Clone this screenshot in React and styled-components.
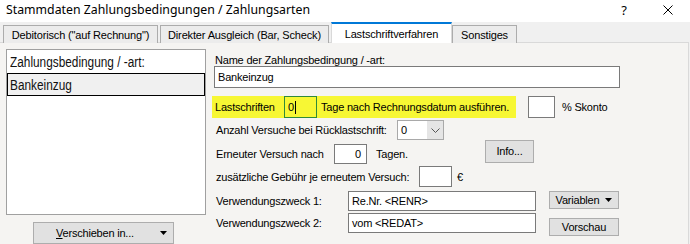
import styled, { createGlobalStyle } from 'styled-components';

const GlobalStyle = createGlobalStyle`
  html, body {
    margin: 0;
    padding: 0;
    background: #ffffff;
  }
  body {
    font-family: "Liberation Sans", Arial, sans-serif;
    font-size: 11px;
    color: #000;
  }
  * {
    box-sizing: border-box;
  }
`;

const Window = styled.div`
  width: 690px;
  height: 244px;
  overflow: hidden;
  display: flex;
  flex-direction: column;
  background: #f0f0f0;
`;

const TitleBar = styled.div`
  height: 22px;
  flex-shrink: 0;
  background: #ffffff;
  display: flex;
  align-items: center;
  padding: 0 0 3px 6px;
  font-family: "Noto Sans", "Open Sans", sans-serif;
  font-size: 12.3px;
`;

const TitleText = styled.div`
  flex: 1;
  white-space: nowrap;
`;

const TitleButton = styled.div`
  width: 44px;
  height: 20px;
  display: flex;
  align-items: center;
  justify-content: center;
  font-family: "Noto Sans", sans-serif;
  font-size: 13px;
`;

const TabStrip = styled.div`
  height: 21px;
  flex-shrink: 0;
  display: flex;
  align-items: flex-end;
  padding-left: 3px;
  letter-spacing: -0.15px;
`;

const Tab = styled.div`
  width: ${p => p.$w}px;
  height: ${p => (p.$active ? 21 : 18)}px;
  margin-right: ${p => p.$gap || 0}px;
  margin-left: ${p => p.$ml || 0}px;
  display: flex;
  align-items: center;
  justify-content: center;
  white-space: nowrap;
  background: ${p => (p.$active ? '#ffffff' : '#ececec')};
  border: 1px solid ${p => (p.$active ? '#d9d9d9' : '#acacac')};
  border-top: ${p => (p.$active ? '2px solid #0078d7' : '1px solid #acacac')};
  border-bottom: none;
  position: relative;
  z-index: ${p => (p.$active ? 2 : 1)};
  padding-top: ${p => (p.$active ? 0 : 1)}px;
`;

const Panel = styled.div`
  flex: 1;
  display: flex;
  background: #f5f4f2;
  border-top: 1px solid #d9d9d9;
  border-right: 1px solid #d9d9d9;
  margin-right: 1px;
  margin-top: -1px;
  padding: 6px 0 0 6px;
`;

const LeftColumn = styled.div`
  width: 200px;
  display: flex;
  flex-direction: column;
`;

const ListBox = styled.div`
  height: 166px;
  background: #ffffff;
  border: 1px solid #a0a0a0;
  font-size: 14px;
  color: #111;
`;

const ListHeader = styled.div`
  height: 23px;
  display: flex;
  align-items: center;
  padding-left: 3px;
  padding-top: 1px;
`;

const ListItem = styled.div`
  height: 23px;
  display: flex;
  align-items: center;
  padding-left: 2px;
  background: ${p => (p.$selected ? '#f0f0f0' : 'transparent')};
  border: 1px solid ${p => (p.$selected ? '#000' : 'transparent')};
`;

/* narrow face of the list font */
const NarrowText = styled.span`
  display: inline-block;
  white-space: nowrap;
  transform: scaleX(0.845);
  transform-origin: left center;
`;

const Button = styled.div`
  width: ${p => p.$w}px;
  height: ${p => p.$h || 22}px;
  background: #e1e1e1;
  border: 1px solid #adadad;
  display: flex;
  align-items: center;
  justify-content: center;
  gap: 6px;
  white-space: nowrap;
  letter-spacing: -0.2px;
  flex-shrink: 0;
`;

const MoveButton = styled(Button)`
  margin: 7px 0 0 27px;
  justify-content: flex-start;
  padding-left: 22px;
  padding-right: 6px;
  gap: 0;
`;

const MoveLabel = styled.span`
  flex: 1;
`;

const Caret = styled.svg`
  display: block;
  flex-shrink: 0;
`;

const RightColumn = styled.div`
  margin-left: 8px;
  padding-top: 5px;
  display: flex;
  flex-direction: column;
  letter-spacing: -0.2px;
`;

const FieldLabel = styled.div`
  height: 12px;
  line-height: 12px;
  padding-left: 1px;
  white-space: nowrap;
`;

const TextBox = styled.div`
  width: ${p => p.$w}px;
  height: ${p => p.$h || 20}px;
  background: ${p => p.$bg || '#ffffff'};
  border: 1px solid ${p => p.$border || '#7a7a7a'};
  display: flex;
  align-items: center;
  justify-content: ${p => (p.$right ? 'flex-end' : 'flex-start')};
  padding: 0 ${p => (p.$right ? 5 : 3)}px 0 3px;
  white-space: nowrap;
  flex-shrink: 0;
`;

const Row = styled.div`
  display: flex;
  align-items: center;
  height: ${p => p.$h}px;
  margin-top: ${p => p.$mt || 0}px;
  white-space: nowrap;
`;

const Highlight = styled.div`
  display: flex;
  align-items: center;
  height: 22px;
  width: 304px;
  margin-left: -2px;
  padding-left: 3px;
  background: #f7f734;
`;

const Text = styled.span`
  margin-left: ${p => p.$ml || 0}px;
  width: ${p => (p.$w ? `${p.$w}px` : 'auto')};
  flex-shrink: 0;
`;

const TextCursor = styled.span`
  display: inline-block;
  width: 1px;
  height: 13px;
  background: #000;
  margin-left: 1px;
`;

const Combo = styled.div`
  width: 47px;
  height: 20px;
  display: flex;
  border: 1px solid #a9a9a9;
  background: #ffffff;
`;

const ComboValue = styled.div`
  flex: 1;
  display: flex;
  align-items: center;
  padding-left: 3px;
`;

const ComboArrow = styled.div`
  width: 16px;
  display: flex;
  align-items: center;
  justify-content: center;
  background: #e5e5e5;
`;

const Slot = styled.div`
  margin-left: ${p => p.$ml || 0}px;
  align-self: ${p => p.$align || 'center'};
  margin-top: ${p => p.$mt || 0}px;
`;

const DownTriangle = () => (
  <Caret width="7" height="4" viewBox="0 0 7 4">
    <path d="M0 0 H7 L3.5 4 Z" fill="#000" />
  </Caret>
);

const App = () => {
  return (
    <>
      <GlobalStyle />
      <Window>
        <TitleBar>
          <TitleText>Stammdaten Zahlungsbedingungen / Zahlungsarten</TitleText>
          <TitleButton>?</TitleButton>
          <TitleButton>
            <svg width="10" height="10" viewBox="0 0 10 10">
              <path d="M0.5 0.5 L9.5 9.5 M9.5 0.5 L0.5 9.5" stroke="#000" strokeWidth="1" fill="none" />
            </svg>
          </TitleButton>
        </TitleBar>

        <TabStrip>
          <Tab $w={155} $gap={2}>Debitorisch ("auf Rechnung")</Tab>
          <Tab $w={169}>Direkter Ausgleich (Bar, Scheck)</Tab>
          <Tab $w={121} $ml={2} $active>Lastschriftverfahren</Tab>
          <Tab $w={65}>Sonstiges</Tab>
        </TabStrip>

        <Panel>
          <LeftColumn>
            <ListBox>
              <ListHeader><NarrowText>Zahlungsbedingung / -art:</NarrowText></ListHeader>
              <ListItem $selected><NarrowText>Bankeinzug</NarrowText></ListItem>
            </ListBox>
            <MoveButton $w={141}>
              <MoveLabel><u>V</u>erschieben in...</MoveLabel>
              <DownTriangle />
            </MoveButton>
          </LeftColumn>

          <RightColumn>
            <FieldLabel>Name der Zahlungsbedingung / -art:</FieldLabel>
            <TextBox $w={406} $h={22}>Bankeinzug</TextBox>

            <Row $h={22} $mt={8}>
              <Highlight>
                <Text $w={69}>Lastschriften</Text>
                <TextBox $w={33} $h={22} $bg="#f7f734" $border="#2f8a3a">
                  0<TextCursor />
                </TextBox>
                <Text $ml={4}>Tage nach Rechnungsdatum ausführen.</Text>
              </Highlight>
              <Slot $ml={12}>
                <TextBox $w={27} $h={22} />
              </Slot>
              <Text $ml={7}>% Skonto</Text>
            </Row>

            <Row $h={20} $mt={2}>
              <Text $ml={2} $w={181}>Anzahl Versuche bei Rücklastschrift:</Text>
              <Combo>
                <ComboValue>0</ComboValue>
                <ComboArrow>
                  <svg width="9" height="5" viewBox="0 0 9 5">
                    <path d="M0.5 0.5 L4.5 4.5 L8.5 0.5" stroke="#555" strokeWidth="1" fill="none" />
                  </svg>
                </ComboArrow>
              </Combo>
            </Row>

            <Row $h={20} $mt={4}>
              <Text $ml={2} $w={118}>Erneuter Versuch nach</Text>
              <TextBox $w={33} $h={20} $right>0</TextBox>
              <Text $ml={9} $w={109}>Tagen.</Text>
              <Slot $mt={-6}>
                <Button $w={49} $h={23}>Info...</Button>
              </Slot>
            </Row>

            <Row $h={21} $mt={2}>
              <Text $ml={2} $w={203}>zusätzliche Gebühr je erneutem Versuch:</Text>
              <TextBox $w={33} $h={21} />
              <Text $ml={5}>€</Text>
            </Row>

            <Row $h={20} $mt={4}>
              <Text $ml={2} $w={132}>Verwendungszweck 1:</Text>
              <TextBox $w={188} $h={20}>Re.Nr. &lt;RENR&gt;</TextBox>
              <Slot $ml={13} $align="flex-start">
                <Button $w={70} $h={18}>
                  Variablen
                  <DownTriangle />
                </Button>
              </Slot>
            </Row>

            <Row $h={20} $mt={2}>
              <Text $ml={2} $w={132}>Verwendungszweck 2:</Text>
              <TextBox $w={188} $h={20}>vom &lt;REDAT&gt;</TextBox>
              <Slot $ml={13} $mt={8}>
                <Button $w={70} $h={18}>Vorschau</Button>
              </Slot>
            </Row>
          </RightColumn>
        </Panel>
      </Window>
    </>
  );
};

export default App;
